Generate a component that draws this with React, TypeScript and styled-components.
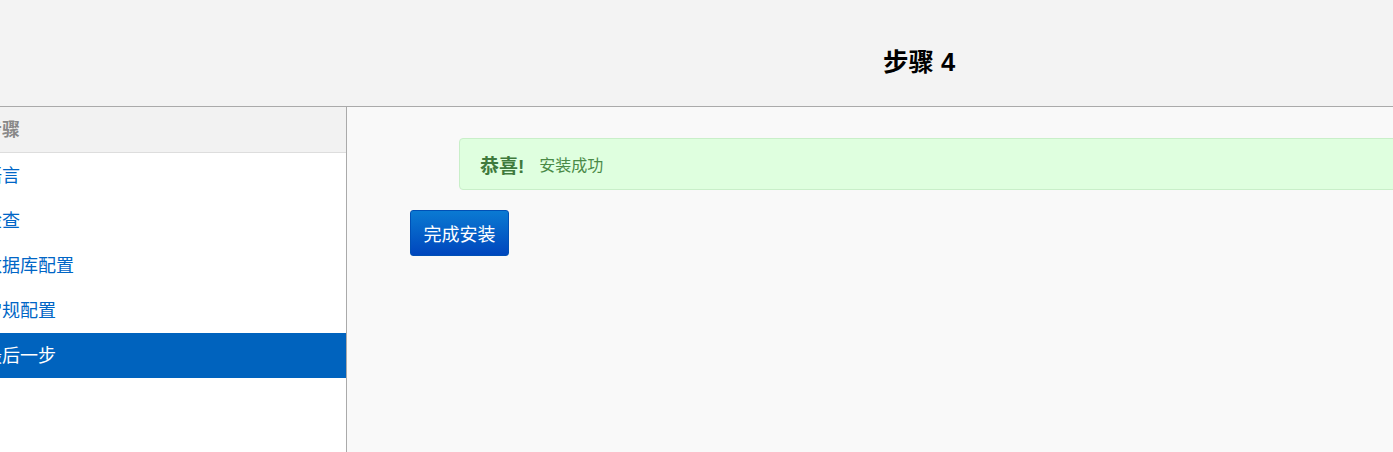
import React from "react";
import styled, { createGlobalStyle } from "styled-components";

const GlobalStyle = createGlobalStyle`
  html, body {
    margin: 0;
    padding: 0;
    overflow: hidden;
    background: #f9f9f9;
    font-family: "Liberation Sans", "Noto Sans CJK SC", sans-serif;
  }
`;

const Page = styled.div`
  display: flex;
  flex-direction: column;
  height: 100vh;
  width: 100vw;
  overflow: hidden;
`;

const Header = styled.header`
  flex: 0 0 107px;
  display: flex;
  align-items: center;
  background: #f3f3f3;
  border-bottom: 1px solid #aaaaaa;
  padding-left: 883px;
  padding-top: 18px;
  box-sizing: border-box;
`;

const Title = styled.h1`
  margin: 0;
  font-size: 25.5px;
  font-weight: bold;
  color: #000;
  line-height: 30px;
  white-space: nowrap;
`;

const Body = styled.div`
  flex: 1;
  display: flex;
  min-height: 0;
`;

const Sidebar = styled.nav`
  flex: 0 0 auto;
  width: 346px;
  margin-left: -31px;
  padding-left: 31px;
  box-sizing: content-box;
  background: #fff;
  border-right: 1px solid #aaaaaa;
  display: flex;
  flex-direction: column;
`;

const SideHeader = styled.div`
  height: 45px;
  line-height: 46px;
  background: #f2f2f2;
  border-bottom: 1px solid #dddddd;
  color: #888;
  font-size: 18px;
  font-weight: bold;
  margin-left: -31px;
  padding-left: 15px;
  white-space: nowrap;
`;

const Item = styled.a<{ $active?: boolean }>`
  display: block;
  height: 45px;
  line-height: 46px;
  font-size: 18px;
  margin-left: -31px;
  padding-left: 15px;
  white-space: nowrap;
  text-decoration: none;
  color: ${(p) => (p.$active ? "#ffffff" : "#0066c6")};
  background: ${(p) => (p.$active ? "#0063be" : "transparent")};
`;

const Main = styled.main`
  flex: 1;
  background: #f9f9f9;
  padding: 31px 0 0 63px;
  display: flex;
  flex-direction: column;
  align-items: flex-start;
  min-width: 0;
`;

const Alert = styled.div`
  margin-left: 49px;
  width: 1100px;
  flex-shrink: 0;
  height: 50px;
  box-sizing: content-box;
  display: flex;
  align-items: center;
  gap: 15px;
  padding-left: 20px;
  background: #dfffdf;
  border: 1px solid #c9efc9;
  border-radius: 4px;
  color: #468847;
`;

const Strong = styled.strong`
  font-size: 19px;
  font-weight: bold;
  color: #3f7a3d;
`;

const Msg = styled.span`
  font-size: 16px;
  color: #4a8a47;
`;

const Button = styled.button`
  margin-top: 20px;
  height: 46px;
  width: 99px;
  padding: 0;
  font-family: inherit;
  font-size: 18px;
  color: #fff;
  border: 1px solid #0050b5;
  border-radius: 3px;
  background: linear-gradient(to bottom, #0a7ad2, #0046bd);
  cursor: pointer;
`;

export default function App() {
  return (
    <>
      <GlobalStyle />
      <Page>
        <Header>
          <Title>步骤 4</Title>
        </Header>
        <Body>
          <Sidebar>
            <SideHeader>步骤</SideHeader>
            <Item href="#">语言</Item>
            <Item href="#">检查</Item>
            <Item href="#">数据库配置</Item>
            <Item href="#">常规配置</Item>
            <Item href="#" $active>最后一步</Item>
          </Sidebar>
          <Main>
            <Alert>
              <Strong>恭喜!</Strong>
              <Msg>安装成功</Msg>
            </Alert>
            <Button>完成安装</Button>
          </Main>
        </Body>
      </Page>
    </>
  );
}
